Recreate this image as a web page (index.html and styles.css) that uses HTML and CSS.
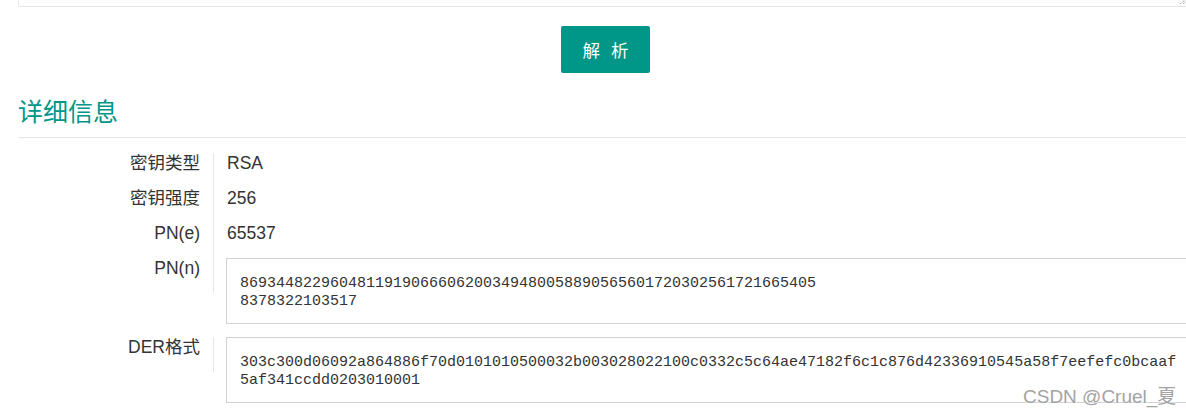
FILE: index.html
```html
<!DOCTYPE html>
<html lang="zh-CN">
<head>
<meta charset="utf-8">
<title>详细信息</title>
<link rel="stylesheet" href="styles.css">
</head>
<body>
<div class="page">
  <div class="src">
    <svg class="grip" width="7" height="4" viewBox="0 0 7 4"><path d="M1 4 L6 0 M4 4 L7 1.6" stroke="#888" stroke-width="1" stroke-dasharray="1 1" fill="none"/></svg>
  </div>
  <div class="actions">
    <button class="btn">解&nbsp;析</button>
  </div>
  <h2 class="title">详细信息</h2>
  <div class="details">
    <div class="row">
      <div class="label">密钥类型</div>
      <div class="value">RSA</div>
    </div>
    <div class="row">
      <div class="label">密钥强度</div>
      <div class="value">256</div>
    </div>
    <div class="row">
      <div class="label">PN(e)</div>
      <div class="value">65537</div>
    </div>
    <div class="row">
      <div class="label">PN(n)</div>
      <div class="box">8693448229604811919066606200349480058890565601720302561721665405
8378322103517</div>
    </div>
    <div class="row row-gap">
      <div class="label">DER格式</div>
      <div class="box">303c300d06092a864886f70d0101010500032b003028022100c0332c5c64ae47182f6c1c876d42336910545a58f7eefefc0bcaaf
5af341ccdd0203010001</div>
    </div>
  </div>
</div>
<div class="watermark">CSDN @Cruel_夏</div>
</body>
</html>
```

FILE: styles.css
```css
html, body {
  margin: 0;
  padding: 0;
  background: #fff;
  overflow: hidden;
}
body {
  font-family: "Liberation Sans", "Noto Sans CJK SC", sans-serif;
  color: #333;
  font-size: 17.5px;
  position: relative;
  height: 418px;
}
.page {
  width: 1175px;
  margin-left: 18px;
}
.src {
  position: relative;
  height: 6px;
  border: 1px solid #e6e6e6;
  border-top: none;
  border-radius: 0 0 2px 2px;
}
.grip {
  position: absolute;
  right: 6px;
  top: 0;
}
.actions {
  display: flex;
  justify-content: center;
  margin-top: 19px;
}
.btn {
  width: 89px;
  height: 47px;
  border: none;
  border-radius: 2px;
  background: #009688;
  color: #fff;
  font-family: "Noto Sans CJK SC", sans-serif;
  font-size: 17.5px;
  word-spacing: 7px;
  padding: 0;
}
.title {
  margin: 20px 0 0;
  padding-bottom: 9px;
  font-family: "Noto Sans CJK SC", sans-serif;
  font-weight: normal;
  font-size: 25px;
  line-height: 35px;
  color: #009688;
  border-bottom: 1px solid #e6e6e6;
}
.details {
  margin-top: 15px;
}
.row {
  display: flex;
  align-items: flex-start;
}
.row-gap {
  margin-top: 13px;
}
.label {
  flex: none;
  width: 182px;
  height: 35px;
  padding-right: 13px;
  text-align: right;
  line-height: 20px;
  border-right: 1px solid #e6e6e6;
}
.value {
  padding-left: 13px;
  line-height: 20px;
}
.box {
  flex: 1;
  margin-left: 12px;
  height: 48px;
  padding: 16px 13px 0;
  border: 1px solid #d2d2d2;
  font-family: "Liberation Mono", monospace;
  font-size: 15px;
  line-height: 18px;
  white-space: pre;
  overflow: hidden;
}
.watermark {
  position: absolute;
  left: 1023px;
  top: 386px;
  font-family: "Liberation Sans", "Noto Sans CJK SC", sans-serif;
  font-size: 19px;
  line-height: 22px;
  color: #a3a3a3;
  text-shadow: 0 0 2px #fff, 0 0 1px #fff;
  white-space: nowrap;
}
```
